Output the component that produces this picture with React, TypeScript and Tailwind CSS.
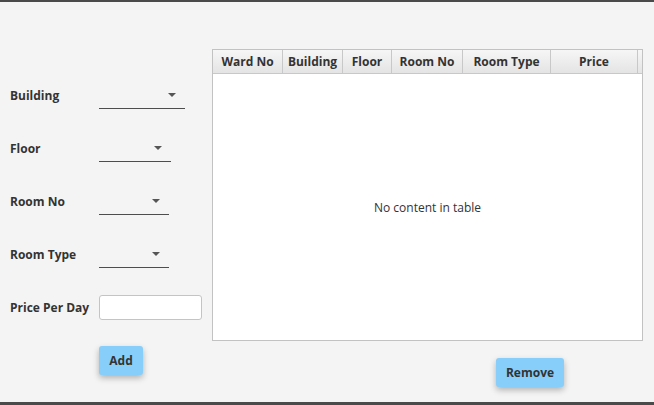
import React from "react";

const font = { fontFamily: '"Open Sans", "Noto Sans", sans-serif' };

function Combo({ width }: { width: string }) {
  return (
    <div className={`${width} h-[27px] border-b border-[#4d4d4d] flex items-center justify-end pr-[9px]`}>
      <div className="w-0 h-0 border-l-[4px] border-r-[4px] border-t-[4px] border-l-transparent border-r-transparent border-t-[#555]" />
    </div>
  );
}

function Row({ label, children }: { label: string; children: React.ReactNode }) {
  return (
    <div className="h-[53px] flex items-center">
      <div className="w-[89px] text-[12px] font-bold text-[#333]">{label}</div>
      {children}
    </div>
  );
}

const cols: [string, number][] = [
  ["Ward No", 70],
  ["Building", 60],
  ["Floor", 49],
  ["Room No", 71],
  ["Room Type", 88],
  ["Price", 87],
];

export default function App() {
  return (
    <div
      style={font}
      className="w-[654px] h-[405px] bg-[#f4f4f4] border-t-2 border-b-[3px] border-[#4a4a4a] flex"
    >
      <div className="w-[212px] pl-[10px] pt-[67px] flex flex-col">
        <Row label="Building">
          <Combo width="w-[86px]" />
        </Row>
        <Row label="Floor">
          <Combo width="w-[72px]" />
        </Row>
        <Row label="Room No">
          <Combo width="w-[70px]" />
        </Row>
        <Row label="Room Type">
          <Combo width="w-[70px]" />
        </Row>
        <Row label="Price Per Day">
          <div className="w-[103px] h-[25px] bg-white border border-[#c4c4c4] rounded-[3px]" />
        </Row>
        <div className="pl-[89px] mt-[12px]">
          <button className="w-[44px] h-[29px] bg-[#87cefa] rounded-[3px] text-[12px] font-bold text-[#333] shadow-[0_3px_6px_rgba(0,0,0,0.28)]">
            Add
          </button>
        </div>
      </div>
      <div className="flex flex-col pt-[47px]">
        <div className="w-[431px] h-[292px] bg-white border border-[#c2c2c2] flex flex-col">
          <div className="h-[24px] flex bg-gradient-to-b from-[#f6f6f6] to-[#e4e4e4] border-b border-[#c8c8c8]">
            {cols.map(([name, w]) => (
              <div
                key={name}
                style={{ width: w }}
                className="h-full flex items-center justify-center border-r border-[#c8c8c8] text-[12px] font-bold text-[#333]"
              >
                {name}
              </div>
            ))}
            <div className="flex-1" />
          </div>
          <div className="flex-1 flex items-center justify-center text-[12px] text-[#333] pt-[2px]">
            No content in table
          </div>
        </div>
        <div className="pl-[284px] pt-[17px]">
          <button className="w-[68px] h-[29px] bg-[#87cefa] rounded-[3px] text-[12px] font-bold text-[#333] shadow-[0_3px_6px_rgba(0,0,0,0.28)]">
            Remove
          </button>
        </div>
      </div>
    </div>
  );
}
